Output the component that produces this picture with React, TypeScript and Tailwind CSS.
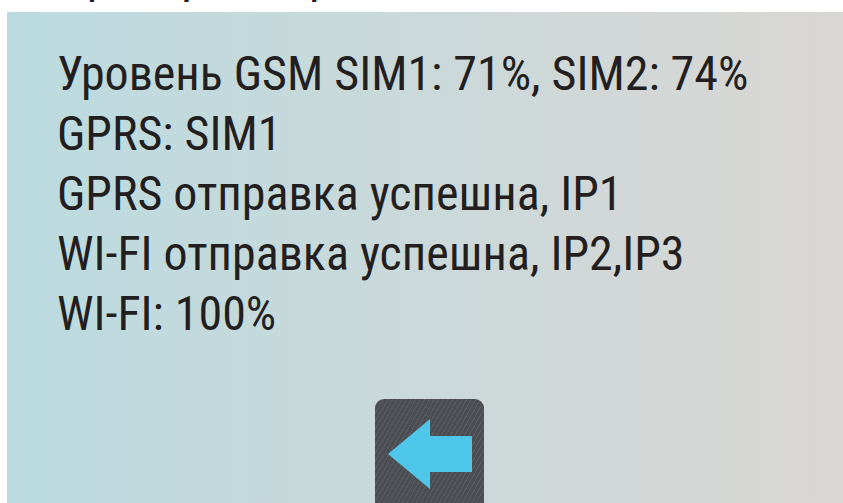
const lines = [
  'Уровень GSM SIM1: 71%, SIM2: 74%',
  'GPRS: SIM1',
  'GPRS отправка успешна, IP1',
  'WI-FI отправка успешна, IP2,IP3',
  'WI-FI: 100%',
];

const fontStack =
  "font-['Roboto_Condensed','Liberation_Sans_Narrow','DejaVu_Sans_Condensed','Liberation_Sans','Noto_Sans_CJK_SC',sans-serif]";

function BackButton() {
  return (
    <button
      type="button"
      className="h-[104px] w-[109px] overflow-hidden rounded-t-[9px] bg-[#4a4d51] bg-[repeating-linear-gradient(120deg,#4a4d51_0px,#4a4d51_3px,#585c5f_3px,#585c5f_4px)]"
    >
      <svg viewBox="0 0 109 104" className="block h-[104px] w-[109px]">
        <polygon points="13,55 55,20 55,37 97,37 97,73 55,73 55,90" fill="#4ec6ea" />
      </svg>
    </button>
  );
}

export default function App() {
  return (
    <div className={`flex h-[503px] w-[843px] flex-col overflow-hidden bg-white text-[#231f20] ${fontStack}`}>
      {/* tail of the previous screen, scrolled off the top */}
      <div className="h-[12px] shrink-0 overflow-hidden pl-[57px]">
        <p className="-mt-[54px] text-[48px] leading-[60px] whitespace-nowrap">Проверка передачи данных</p>
      </div>

      <div className="ml-[7px] flex flex-1 flex-col overflow-hidden bg-gradient-to-r from-[#bbdbe0] to-[#d9d6d3]">
        <div className="pl-[50px] pt-[32px]">
          {lines.map((line) => (
            <p key={line} className="text-[48px] leading-[60px] whitespace-nowrap">
              {line}
            </p>
          ))}
        </div>
        <div className="mt-auto flex justify-center pl-[9px]">
          <BackButton />
        </div>
      </div>
    </div>
  );
}
